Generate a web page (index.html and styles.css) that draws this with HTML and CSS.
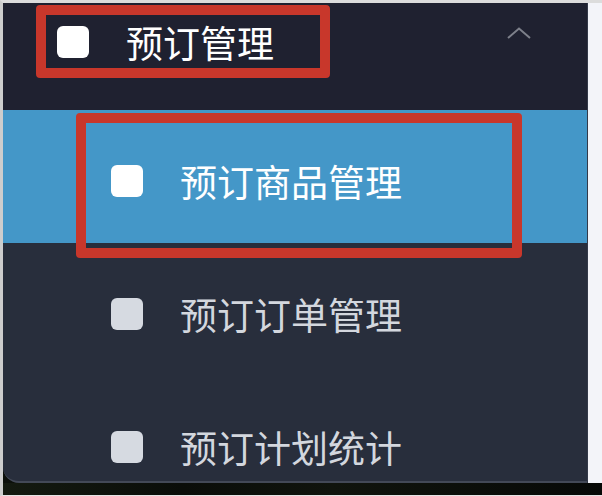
FILE: index.html
```html
<!DOCTYPE html>
<html lang="zh-CN">
<head>
<meta charset="utf-8">
<title>预订管理</title>
<link rel="stylesheet" href="styles.css">
</head>
<body>
<div class="frame">
  <div class="top">
    <nav class="panel">
      <div class="head">
        <div class="head-label">
          <span class="icon icon-white"></span>
          <span class="label">预订管理</span>
        </div>
        <svg class="chevron" width="24" height="12" viewBox="0 0 24 12">
          <polyline points="1,11 12,1.5 23,11" fill="none" stroke="#7d808a" stroke-width="2"/>
        </svg>
      </div>
      <div class="item active">
        <span class="icon icon-white"></span>
        <span class="label">预订商品管理</span>
        <span class="mark"></span>
      </div>
      <div class="item">
        <span class="icon"></span>
        <span class="label">预订订单管理</span>
      </div>
      <div class="item">
        <span class="icon"></span>
        <span class="label">预订计划统计</span>
      </div>
    </nav>
    <div class="side"></div>
  </div>
  <div class="ground"></div>
</div>
</body>
</html>
```
FILE: styles.css
```css
html, body {
  margin: 0;
  padding: 0;
}
body {
  width: 602px;
  height: 496px;
  overflow: hidden;
  background: #e4e4e4;
  font-family: "Noto Sans CJK SC", "Noto Sans", sans-serif;
}
.frame {
  box-sizing: border-box;
  width: 602px;
  height: 496px;
  border-top: 3px solid #dcdcdc;
  border-left: 3px solid #cdcdcd;
  border-bottom: 1px solid #e4e4e4;
  display: flex;
  flex-direction: column;
  background: #0c100b;
}
.top {
  display: flex;
  height: 480px;
}
.panel {
  box-sizing: border-box;
  width: 585px;
  height: 480px;
  background: #282e3c;
  border-bottom: 2px solid #434957;
  border-right: 1px solid #343a49;
  border-bottom-left-radius: 16px;
  overflow: hidden;
  display: flex;
  flex-direction: column;
}
.side {
  flex: 1;
  background: #f3f4f9;
}
.ground {
  flex: 1;
  background: linear-gradient(90deg, #141a10 0%, #0a0d09 30%, #10140d 55%, #070907 100%);
}
.head {
  box-sizing: border-box;
  height: 107px;
  flex: none;
  background: #1f2130;
  display: flex;
  justify-content: space-between;
  align-items: flex-start;
  padding: 2px 56px 0 33px;
}
.head-label {
  box-sizing: border-box;
  width: 294px;
  height: 73px;
  border: 10px solid #c8372b;
  border-radius: 4px;
  display: flex;
  align-items: center;
  padding-left: 11px;
  gap: 37px;
}
.chevron {
  display: block;
  margin-top: 22px;
}
.icon {
  flex: none;
  width: 32px;
  height: 32px;
  border-radius: 6px;
  background: #d6dae1;
}
.icon-white {
  background: #ffffff;
}
.label {
  font-size: 37px;
  line-height: 40px;
  color: #d3d7de;
  white-space: nowrap;
}
.head-label .label,
.item.active .label {
  color: #ffffff;
}
.item {
  position: relative;
  box-sizing: border-box;
  height: 133px;
  flex: none;
  display: flex;
  align-items: center;
  gap: 37px;
  padding: 9px 0 0 108px;
}
.item.active {
  background: #4497c8;
  z-index: 1;
}
.mark {
  position: absolute;
  left: 73px;
  top: 3px;
  width: 446px;
  height: 145px;
  box-sizing: border-box;
  border: 10px solid #c8372b;
  border-radius: 4px;
  z-index: 2;
}
```
